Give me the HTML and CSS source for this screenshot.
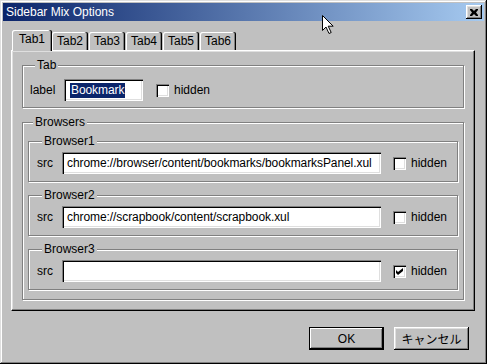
FILE: index.html
```html
<!DOCTYPE html>
<html lang="ja">
<head>
    <meta charset="UTF-8">
    <title>Sidebar Mix Options</title>
    <link rel="stylesheet" href="styles.css">
</head>
<body>

    <div class="window">
        <div class="titlebar">
            <span class="title">Sidebar Mix Options</span>
            <button class="close-button">
                <svg width="8" height="7" viewBox="0 0 8 7">
                    <path d="M0 0h2l2 2 2-2h2v1l-2 2.5 2 2.5v1h-2l-2-2-2 2h-2v-1l2-2.5-2-2.5z" fill="#000"/>
                </svg>
            </button>
        </div>

        <div class="dialog-body">
            <div class="tabs">
                <div class="tab selected">Tab1</div>
                <div class="tab">Tab2</div>
                <div class="tab">Tab3</div>
                <div class="tab">Tab4</div>
                <div class="tab">Tab5</div>
                <div class="tab">Tab6</div>
            </div>

            <div class="tab-panel">
                <!-- Tab settings -->
                <div class="group group-tab">
                    <div class="legend">Tab</div>
                    <div class="row">
                        <span class="field-label label-tab">label</span>
                        <div class="textbox textbox-short"><span class="selection">Bookmark</span></div>
                        <span class="checkbox"></span>
                        <span class="check-label">hidden</span>
                    </div>
                </div>

                <!-- Browsers -->
                <div class="group group-browsers">
                    <div class="legend">Browsers</div>

                    <div class="group browser">
                        <div class="legend">Browser1</div>
                        <div class="row">
                            <span class="field-label label-src">src</span>
                            <div class="textbox textbox-long">chrome://browser/content/bookmarks/bookmarksPanel.xul</div>
                            <span class="checkbox"></span>
                            <span class="check-label">hidden</span>
                        </div>
                    </div>

                    <div class="group browser">
                        <div class="legend">Browser2</div>
                        <div class="row">
                            <span class="field-label label-src">src</span>
                            <div class="textbox textbox-long">chrome://scrapbook/content/scrapbook.xul</div>
                            <span class="checkbox"></span>
                            <span class="check-label">hidden</span>
                        </div>
                    </div>

                    <div class="group browser">
                        <div class="legend">Browser3</div>
                        <div class="row">
                            <span class="field-label label-src">src</span>
                            <div class="textbox textbox-long"></div>
                            <span class="checkbox checked">
                                <svg width="7" height="7" viewBox="0 0 7 7">
                                    <path d="M0 2l2 2 5-4v3l-5 4-2-2z" fill="#000"/>
                                </svg>
                            </span>
                            <span class="check-label">hidden</span>
                        </div>
                    </div>
                </div>
            </div>

            <div class="buttons">
                <button class="push-button default">OK</button>
                <button class="push-button">キャンセル</button>
            </div>
        </div>

        <!-- mouse pointer left in the shot -->
        <svg class="cursor" width="12" height="20" viewBox="0 0 12 20">
            <path d="M0.5 0.5v15l3.5-3.5 3 6.5 2.2-1-3-6.3h5z" fill="#fff" stroke="#000" stroke-width="1"/>
        </svg>
    </div>

</body>
</html>
```

FILE: styles.css
```css
body {
    margin: 0;
    font-family: "Liberation Sans", "Noto Sans CJK JP", sans-serif;
    font-size: 12px;
    color: #000;
}
.window {
    position: relative;
    width: 487px;
    height: 364px;
    box-sizing: border-box;
    padding: 3px;
    background-color: #c0c0c0;
    box-shadow: inset -1px -1px #000, inset 1px 1px #dfdfdf, inset -2px -2px #808080, inset 2px 2px #fff;
}
.titlebar {
    display: flex;
    align-items: center;
    justify-content: space-between;
    height: 18px;
    padding: 0 2px 0 2px;
    background: linear-gradient(to right, #0a246a, #a6caf0);
    color: #fff;
}
.title {
    padding-left: 1px;
    font-size: 12px;
}
.close-button {
    display: flex;
    align-items: center;
    justify-content: center;
    width: 16px;
    height: 14px;
    padding: 0;
    border: none;
    background-color: #c0c0c0;
    box-shadow: inset -1px -1px #000, inset 1px 1px #fff, inset -2px -2px #808080, inset 2px 2px #dfdfdf;
}
.dialog-body {
    padding: 9px 0 0 8px;
}
.tabs {
    display: flex;
    align-items: flex-end;
    height: 20px;
    padding-left: 1px;
}
.tab {
    width: 36px;
    height: 18px;
    margin-right: 1px;
    box-sizing: border-box;
    line-height: 18px;
    text-align: center;
    border-radius: 2px 2px 0 0;
    background-color: #c0c0c0;
    box-shadow: inset -1px 0 #000, inset -2px 0 #808080, inset 1px 1px #fff;
}
.tab.selected {
    position: relative;
    z-index: 1;
    width: 40px;
    height: 21px;
    margin-right: 0;
    margin-bottom: -1px;
    line-height: 19px;
}
.tab-panel {
    width: 464px;
    height: 261px;
    box-sizing: border-box;
    padding: 14px 10px 0;
    border: 1px solid;
    border-color: #fff #000 #000 #fff;
    box-shadow: inset -1px -1px #808080, inset 1px 1px #dfdfdf;
}
.group {
    border: 1px solid #808080;
    box-shadow: inset 1px 1px #fff, 1px 1px #fff;
}
.legend {
    width: fit-content;
    margin: -8px 0 0 5px;
    padding: 0 2px;
    line-height: 14px;
    background-color: #c0c0c0;
}
.group-tab {
    padding: 0 7px 6px;
}
.group-tab .row {
    margin-top: 7px;
}
.group-browsers {
    margin-top: 14px;
    padding: 0 5px 9px;
}
.browser {
    margin-top: 13px;
    padding: 0 8px 7px;
}
.group-browsers .legend + .browser {
    margin-top: 12px;
}
.browser .row {
    margin-top: 4px;
}
.row {
    display: flex;
    align-items: center;
    height: 22px;
}
.field-label.label-tab {
    width: 34px;
}
.field-label.label-src {
    width: 25px;
}
.textbox {
    height: 22px;
    box-sizing: border-box;
    padding: 0 5px;
    line-height: 22px;
    letter-spacing: -0.08px;
    white-space: nowrap;
    overflow: hidden;
    background-color: #fff;
    box-shadow: inset 1px 1px #808080, inset 2px 2px #000, inset -1px -1px #fff, inset -2px -2px #dfdfdf;
}
.textbox-short {
    width: 79px;
    padding-left: 6px;
}
.textbox-long {
    width: 319px;
}
.selection {
    display: inline-block;
    padding: 0 1px;
    line-height: 15px;
    background-color: #0a246a;
    color: #fff;
}
.checkbox {
    display: flex;
    align-items: center;
    justify-content: center;
    width: 13px;
    height: 13px;
    box-sizing: border-box;
    margin-left: 13px;
    background-color: #fff;
    box-shadow: inset 1px 1px #808080, inset 2px 2px #000, inset -1px -1px #fff, inset -2px -2px #dfdfdf;
}
.browser .checkbox {
    margin-left: 12px;
}
.check-label {
    margin-left: 5px;
}
.buttons {
    display: flex;
    justify-content: flex-end;
    gap: 10px;
    width: 464px;
    box-sizing: border-box;
    margin-top: 16px;
    padding-right: 6px;
}
.push-button {
    width: 75px;
    height: 23px;
    padding: 0;
    border: none;
    font-family: "Liberation Sans", "Noto Sans CJK JP", sans-serif;
    font-size: 12px;
    color: #000;
    background-color: #c0c0c0;
    box-shadow: inset -1px -1px #000, inset 1px 1px #fff, inset -2px -2px #808080, inset 2px 2px #dfdfdf;
}
.push-button.default {
    border: 1px solid #000;
    box-shadow: inset -1px -1px #000, inset 1px 1px #fff, inset -2px -2px #808080;
}
.cursor {
    position: absolute;
    left: 322px;
    top: 15px;
}
```
